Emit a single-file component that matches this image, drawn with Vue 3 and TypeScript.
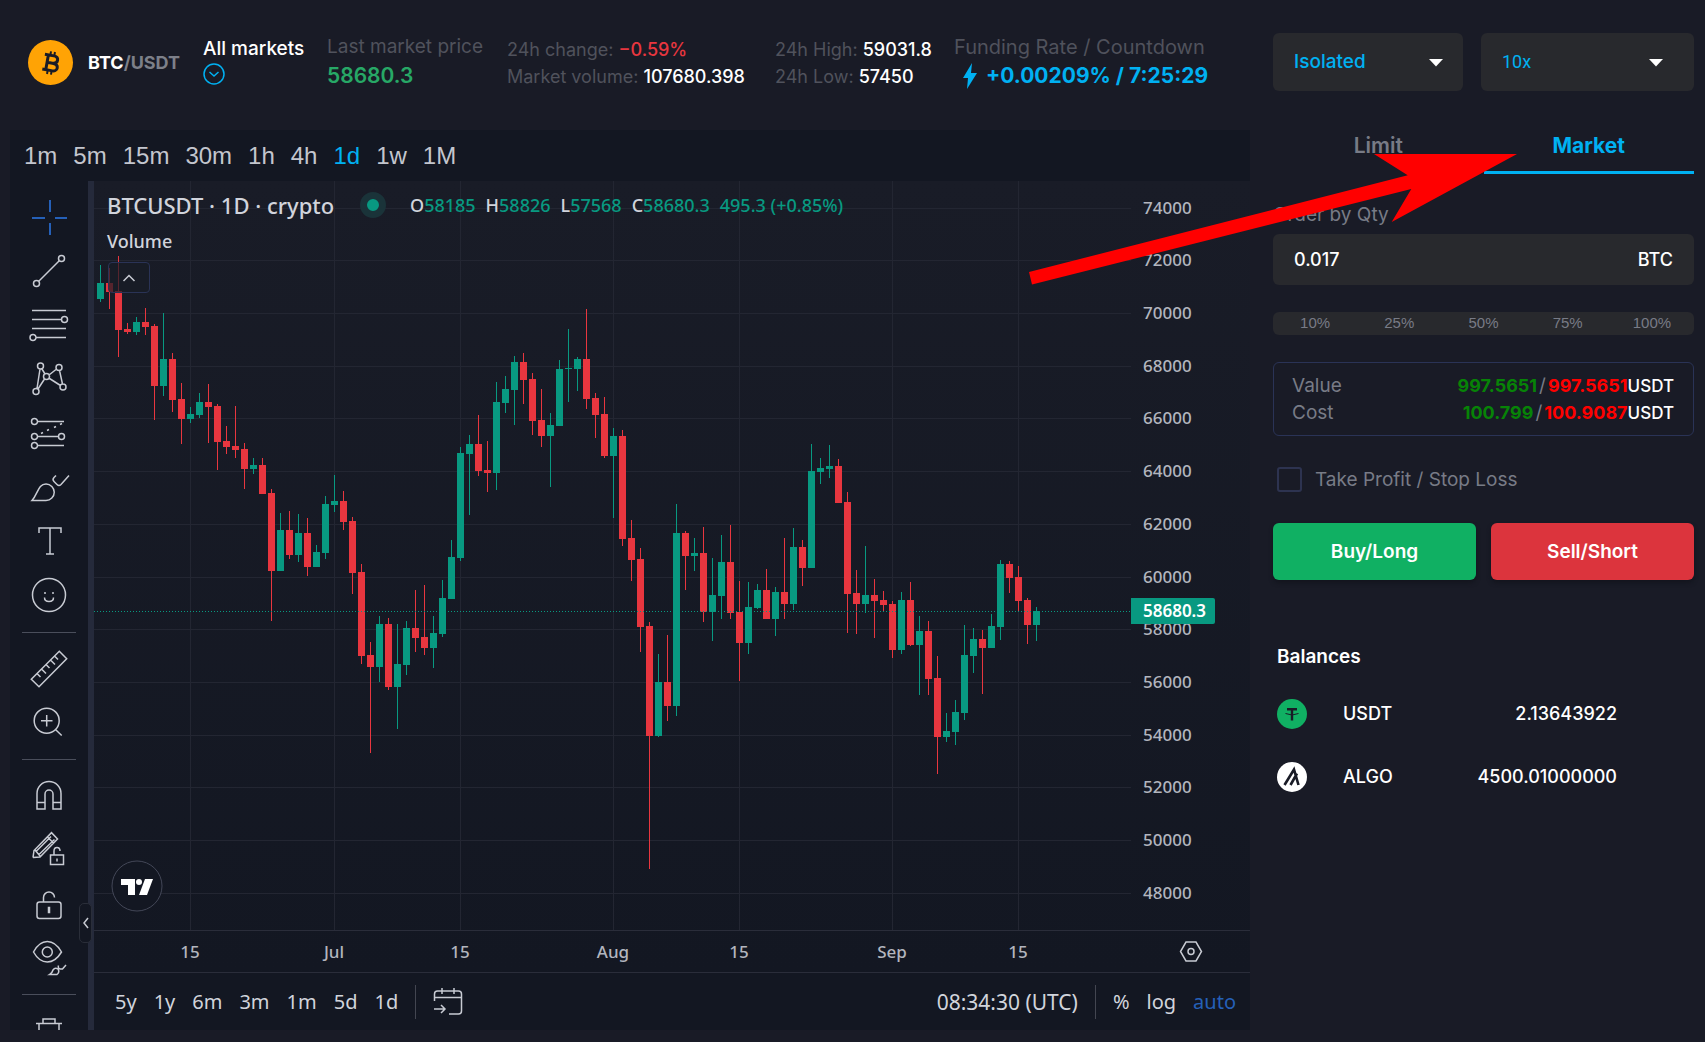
<script setup lang="ts">
import { ref } from 'vue'

type Candle = [up: 0 | 1, high: number, top: number, bottom: number, low: number]

const intervals = ['1m', '5m', '15m', '30m', '1h', '4h', '1d', '1w', '1M']
const activeInterval = ref('1d')
const ranges = ['5y', '1y', '6m', '3m', '1m', '5d', '1d']
const percents = ['10%', '25%', '50%', '75%', '100%']
const marginMode = ref('Isolated')
const leverage = ref('10x')
const qty = ref('0.017')
const takeProfit = ref(false)

const priceTicks = [
  { y: 208, label: '74000' }, { y: 260, label: '72000' }, { y: 313, label: '70000' },
  { y: 366, label: '68000' }, { y: 418, label: '66000' }, { y: 471, label: '64000' },
  { y: 524, label: '62000' }, { y: 577, label: '60000' }, { y: 629, label: '58000' },
  { y: 682, label: '56000' }, { y: 735, label: '54000' }, { y: 787, label: '52000' },
  { y: 840, label: '50000' }, { y: 893, label: '48000' },
]
const timeTicks = [
  { x: 190, label: '15' }, { x: 334, label: 'Jul' }, { x: 460, label: '15' },
  { x: 613, label: 'Aug' }, { x: 739, label: '15' }, { x: 892, label: 'Sep' },
  { x: 1018, label: '15' },
]

const candles: Candle[] = [
  [1, 265, 283, 299, 302], [0, 268, 283, 292, 309], [0, 256, 291, 330, 357], [0, 323, 329, 332, 334],
  [1, 317, 322, 332, 335], [0, 308, 322, 327, 335], [0, 324, 326, 386, 420], [1, 313, 359, 386, 396],
  [0, 353, 359, 400, 412], [0, 383, 399, 419, 444], [1, 407, 414, 419, 423], [1, 393, 402, 415, 418],
  [0, 384, 402, 407, 443], [0, 404, 406, 442, 470], [0, 426, 441, 447, 454], [0, 406, 446, 450, 458],
  [0, 443, 449, 469, 489], [1, 458, 465, 469, 474], [0, 458, 465, 494, 494], [0, 489, 493, 571, 621],
  [1, 513, 530, 571, 571], [0, 511, 530, 555, 559], [1, 514, 533, 555, 562], [0, 518, 533, 567, 576],
  [1, 545, 552, 567, 567], [1, 496, 504, 553, 559], [1, 475, 501, 505, 512], [0, 491, 501, 522, 530],
  [0, 517, 521, 573, 594], [0, 564, 572, 656, 664], [0, 642, 655, 667, 753], [1, 616, 624, 667, 682],
  [0, 618, 624, 687, 690], [1, 624, 664, 687, 729], [1, 621, 628, 665, 675], [0, 590, 628, 638, 652],
  [0, 585, 637, 648, 655], [1, 616, 633, 648, 668], [1, 580, 598, 634, 637], [1, 540, 557, 599, 599],
  [1, 447, 453, 558, 561], [1, 435, 444, 454, 515], [0, 415, 444, 471, 476], [0, 441, 470, 473, 492],
  [1, 382, 402, 473, 490], [1, 376, 389, 403, 413], [1, 356, 362, 390, 425], [0, 353, 362, 380, 404],
  [0, 373, 379, 421, 435], [0, 389, 420, 436, 447], [1, 413, 425, 436, 487], [1, 360, 369, 426, 426],
  [1, 329, 368, 369, 402], [1, 357, 359, 369, 391], [0, 309, 359, 399, 409], [0, 393, 398, 415, 438],
  [0, 397, 414, 456, 458], [1, 428, 436, 456, 518], [0, 430, 436, 539, 546], [0, 520, 538, 560, 581],
  [0, 548, 559, 627, 652], [0, 622, 626, 736, 869], [1, 654, 682, 736, 737], [0, 635, 682, 706, 721],
  [1, 504, 533, 706, 716], [0, 531, 533, 556, 590], [1, 538, 553, 556, 571], [0, 527, 553, 612, 622],
  [1, 558, 595, 612, 641], [1, 535, 562, 596, 619], [0, 525, 562, 613, 619], [0, 581, 612, 643, 681],
  [1, 582, 607, 643, 654], [1, 584, 590, 608, 609], [0, 569, 590, 619, 619], [1, 587, 592, 619, 636],
  [0, 538, 592, 604, 619], [1, 528, 547, 604, 610], [0, 540, 547, 568, 586], [1, 444, 471, 568, 568],
  [1, 458, 468, 472, 484], [1, 445, 466, 469, 478], [0, 459, 466, 503, 503], [0, 492, 502, 594, 633],
  [0, 570, 593, 604, 634], [1, 546, 595, 604, 613], [0, 579, 595, 601, 638], [0, 591, 600, 605, 611],
  [0, 601, 604, 650, 658], [1, 592, 600, 650, 654], [0, 582, 600, 645, 646], [1, 616, 631, 645, 695],
  [0, 621, 631, 679, 695], [0, 656, 678, 737, 774], [1, 713, 731, 737, 742], [1, 700, 712, 732, 745],
  [1, 625, 655, 713, 720], [1, 628, 639, 656, 673], [0, 630, 639, 648, 694], [1, 614, 626, 648, 648],
  [1, 560, 564, 627, 640], [0, 561, 564, 578, 593], [0, 566, 577, 601, 611], [0, 598, 600, 625, 644],
  [1, 607, 611, 625, 641],
]

interface Tool { name: string; d: string; cls?: string; sep?: boolean }
const dot = (x: number, y: number, r = 3) => `M${x - r} ${y}a${r} ${r} 0 1 0 ${2 * r} 0a${r} ${r} 0 1 0 ${-2 * r} 0z`
const tools: Tool[] = [
  { name: 'Cross', cls: 'blue', d: 'M28 9v12M28 32v12M10 27h13M33 27h12' },
  { name: 'Trend line', d: dot(39.5, 13.5) + dot(14.5, 38.5) + 'M17 36L37 16' },
  { name: 'Fib retracement', d: 'M10 11.5h34M10 20.5h29M10 29.5h34M14 38.5h30' + dot(42.5, 20.5) + dot(11, 38.5) },
  { name: 'Patterns', d: dot(18.5, 13) + dot(37, 14.5) + dot(24.5, 23.5) + dot(14, 38.5) + dot(41, 34) + 'M18 16L15 35.500M20 16l3 5M27 22l7-5.500M37.500 17.500l3 13.500M27.500 25.500l11 7M22.500 26L16 36' },
  { name: 'Forecasting', d: dot(12.5, 14.5) + dot(12.5, 29.5) + dot(39.5, 29.5) + dot(12.5, 38.5) + 'M16 14.500h26M16 29.500h20M16 38.500h26M19 26.500l2-1M25 23.500l2-1M32 20.500l2-1M38 17.500l2-1' },
  { name: 'Brush', d: 'M10 39.500C16 33 16 23 24 23a8.200 8.200 0 0 1 0 16.500zM34 14.500l-2 2q-2 2 0 4l3 3q2 2 4 0l8-9' },
  { name: 'Text', d: 'M17 18v-5h22v5M28 13v26M24 39h8' },
  { name: 'Icons', sep: true, d: dot(27, 26, 16.5) + 'M22.500 28.500q0 4 4.500 4t4.500-4M23 23v2M31 23v2' },
  { name: 'Measure', d: 'M37.300 9.300l7.400 7.400L17 44.700l-7.700-7.400zM15.500 32l3 3M20 27.500l4 4M24.500 23l3 3M29 18.500l4 4M33 14.500l3 3' },
  { name: 'Zoom in', sep: true, d: dot(24.7, 24.7, 12.5) + 'M34 34l5.700 5.500M24.700 19v11.500M19 24.700h11.500' },
  { name: 'Magnet', d: 'M15 40V24.500a12 12 0 0 1 24 0V40h-8V25a4 4 0 0 0-8 0v15zM15 33.500h8M31 33.500h8' },
  { name: 'Stay in drawing mode', d: 'M11 34.500l1-7L29.500 9.700l6 6.300L18 34l-7 .5M25.500 14l6 6M14 28.500l15-15M17 31.500l15.500-15M13 27l5 6M28.500 32h13v9.500h-13zM32 32v-4q0-3.500 3-3.500t3 3.500M35 35.500v3' },
  { name: 'Lock all drawings', d: 'M17.500 25h19q2.500 0 2.500 2.500v11.500q0 2.500-2.500 2.500h-19q-2.500 0-2.500-2.500v-11.500q0-2.500 2.500-2.500zM21.500 25v-4.500a5.500 5.500 0 0 1 11 0M26.500 30.500v5h1v-5z' },
  { name: 'Hide all drawings', sep: true, d: 'M11.500 21Q17 10.500 25.300 10.500T39.500 21Q33.500 31 25.300 31T11.500 21z' + dot(25.3, 21, 5) + 'M27.500 43.500q3-2 3.500-4.500 2-3 5-1 2 3-1 5.500zM36.500 34.500q-1 3 2 3.500h2l3.500-4' },
  { name: 'Remove', d: 'M14 19.500h26M21 19v-4h12v4M17 20v20h20V20M24 26v8M30 26v8' },
]
</script>

<template>
  <div class="page">
    <main class="left">
      <header class="ticker">
        <div class="pair">
          <svg width="46" height="46" viewBox="0 0 46 46" aria-hidden="true">
            <circle cx="22.500" cy="22.500" r="22.500" fill="#ffa305" />
            <g fill="none" stroke="#191b26" transform="rotate(10 23 23)">
              <path stroke-width="3" d="M19 15.500v15M15.500 15.500h9q4.500 0 4.500 3.700t-4.500 3.800H19M24.500 23q5.500 0 5.500 3.800t-5.500 3.700h-9" />
              <path stroke-width="2" d="M21 11.500v4M25 11.500v4M21 30.500v4M25 30.500v4" />
            </g>
          </svg>
          <strong>BTC<span>/USDT</span></strong>
        </div>
        <a class="markets" href="#">All markets
          <svg width="22" height="22" viewBox="0 0 22 22" fill="none" stroke="#00b1f2" stroke-width="1.500"><circle cx="11" cy="11" r="10" /><path d="M6.500 9l4.500 4 4.500-4" /></svg>
        </a>
        <div class="stat"><span class="label">Last market price</span><b class="price">58680.3</b></div>
        <div class="pairlines">
          <span>24h change: <em class="neg">−0.59%</em></span>
          <span>Market volume: <em>107680.398</em></span>
        </div>
        <div class="pairlines">
          <span>24h High: <em>59031.8</em></span>
          <span>24h Low: <em>57450</em></span>
        </div>
        <div class="stat">
          <span class="label wide">Funding Rate / Countdown</span>
          <b class="funding"><svg width="14" height="26" viewBox="0 0 14 26" fill="#00b1f2"><path d="M9 0L0 15h5L4 26l10-16H8z" /></svg>+0.00209% / 7:25:29</b>
        </div>
      </header>

      <section class="terminal">
        <nav class="intervals">
          <button v-for="i in intervals" :key="i" :class="{ on: i === activeInterval }" @click="activeInterval = i">{{ i }}</button>
        </nav>
        <div class="body">
          <aside class="tools">
            <template v-for="t in tools" :key="t.name">
              <button :aria-label="t.name" :class="t.cls"><svg width="54" height="54" viewBox="0 0 54 54"><path :d="t.d" /></svg></button>
              <hr v-if="t.sep">
            </template>
          </aside>
          <div class="gutter"><button class="fold" aria-label="Hide drawings toolbar"><svg width="6" height="12" viewBox="0 0 6 12"><path d="M5 1L1 6l4 5" /></svg></button></div>
          <div class="chartcol">
            <div class="canvas">
              <svg class="chart" viewBox="94 181 1156 791">
                <g class="grid">
                  <rect v-for="p in priceTicks" :key="p.y" x="94" :y="p.y" width="1037" height="1" />
                  <rect v-for="t in timeTicks" :key="t.x" :x="t.x" y="181" width="1" height="749" />
                </g>
                <rect class="axis" x="94" y="930" width="1156" height="1" />
                <g v-for="(c, i) in candles" :key="i" :class="c[0] ? 'up' : 'down'">
                  <rect :x="100 + i * 9" :y="c[1]" width="1" :height="c[4] - c[1]" />
                  <rect :x="97 + i * 9" :y="c[2]" width="7" :height="c[3] - c[2]" />
                </g>
                <line x1="94" x2="1131" y1="611.500" y2="611.500" stroke="#089981" stroke-dasharray="1 2" />
                <g class="ticks">
                  <text v-for="p in priceTicks" :key="p.y" x="1143" :y="p.y + 6">{{ p.label }}</text>
                  <text v-for="t in timeTicks" :key="t.x" :x="t.x" y="958" text-anchor="middle">{{ t.label }}</text>
                </g>
                <path class="up" d="M1131 598h82q2 0 2 2v22q0 2-2 2h-82z" />
                <text class="last" x="1143" y="617">58680.3</text>
                <g fill="none" stroke="#c8cbd3" stroke-width="1.500"><path d="M1186 942h10l5.500 9.500-5.500 9.500h-10l-5.500-9.500z" /><circle cx="1191" cy="951.500" r="3" /></g>
                <circle cx="137" cy="886" r="25" fill="#131722" stroke="#434757" />
                <path fill="#fff" d="M121 879h14v16h-7v-10h-7zM145 879h8l-6 16h-8z" /><circle cx="139" cy="882" r="3" fill="#fff" />
              </svg>
              <div class="legend">
                <div class="row">
                  <span class="symbol">BTCUSDT · 1D · crypto</span>
                  <i class="live"></i>
                  <span class="ohlc"><span>O<em>58185</em></span><span>H<em>58826</em></span><span>L<em>57568</em></span><span>C<em>58680.3</em></span><em>495.3 (+0.85%)</em></span>
                </div>
                <span class="volume">Volume</span>
                <button class="collapse" aria-label="Collapse legend"><svg width="14" height="8" viewBox="0 0 14 8"><path d="M1.500 7L7 1.500 12.500 7" /></svg></button>
              </div>
            </div>
            <footer class="ranges">
              <button v-for="r in ranges" :key="r">{{ r }}</button>
              <i class="bar"></i>
              <button class="goto" aria-label="Go to date"><svg width="30" height="30" viewBox="0 0 30 30"><path d="M1.500 14V7q0-3 3-3h21q3 0 3 3v17q0 3-3 3H16M1.500 10.500h27M9 1v6M21 1v6M1 22h11M8 18l4 4-4 4" /></svg></button>
              <span class="clock">08:34:30 (UTC)</span>
              <i class="bar"></i>
              <button class="pct">%</button><button>log</button><button class="auto">auto</button>
            </footer>
          </div>
        </div>
      </section>
    </main>

    <aside class="order">
      <div class="selects">
        <label class="select"><select v-model="marginMode" aria-label="Margin mode"><option>Isolated</option><option>Cross</option></select><svg width="14" height="8" viewBox="0 0 14 8"><path d="M0 0h14L7 7.500z" /></svg></label>
        <label class="select lev"><select v-model="leverage" aria-label="Leverage"><option>10x</option><option>20x</option></select><svg width="14" height="8" viewBox="0 0 14 8"><path d="M0 0h14L7 7.500z" /></svg></label>
      </div>
      <div class="tabs"><button>Limit</button><button class="on">Market</button></div>
      <label class="qtylabel" for="qty">Order by Qty</label>
      <div class="qty"><input id="qty" v-model="qty"><span>BTC</span></div>
      <div class="percents"><button v-for="p in percents" :key="p">{{ p }}</button></div>
      <div class="summary">
        <div><span>Value</span><span class="amount"><b class="g">997.5651</b>/<b class="r">997.5651</b><em>USDT</em></span></div>
        <div><span>Cost</span><span class="amount"><b class="g">100.799</b>/<b class="r">100.9087</b><em>USDT</em></span></div>
      </div>
      <label class="tpsl"><input v-model="takeProfit" type="checkbox">Take Profit / Stop Loss</label>
      <div class="actions"><button class="buy">Buy/Long</button><button class="sell">Sell/Short</button></div>
      <h2>Balances</h2>
      <table>
        <tbody>
          <tr>
            <td class="coin"><svg width="30" height="30" viewBox="0 0 30 30"><circle cx="15" cy="15" r="15" fill="#10b063" /><path d="M10 10.200h10M15 10.200v11.300" stroke="#191b26" stroke-width="2.400" /><path d="M8.500 14.500q6.500 3 13 0" fill="none" stroke="#191b26" /></svg></td>
            <td>USDT</td><td class="num">2.13643922</td>
          </tr>
          <tr>
            <td class="coin"><svg width="30" height="30" viewBox="0 0 30 30"><circle cx="15" cy="15" r="15" fill="#fff" /><path d="M7.500 23L17 7.500 21.500 23M13.500 23L20 11.500" fill="none" stroke="#191b26" stroke-width="2.600" /></svg></td>
            <td>ALGO</td><td class="num">4500.01000000</td>
          </tr>
        </tbody>
      </table>
    </aside>

    <svg class="arrow" width="490" height="132" viewBox="1028 153 490 132" aria-hidden="true"><path fill="#f00" d="M1517 154L1391.700 222 1411.300 189 1032 284.500 1029 272 1407.700 175.300 1374 154z" /></svg>
  </div>
</template>

<style>
body { margin: 0; background: #191b26; }
</style>

<style scoped>
* { box-sizing: border-box; }
.page { position: relative; display: flex; gap: 23px; padding: 0 11px 12px 10px; background: #191b26; color: #fff; font: 18px/26px Inter, sans-serif; overflow: hidden; }
button { background: none; border: 0; padding: 0; margin: 0; color: inherit; font: inherit; cursor: pointer; }
em { font-style: normal; }
.left { flex: 1; min-width: 0; }
.ticker { display: grid; grid-template-columns: 175px 124px 180px 268px 179px 1fr; height: 130px; padding: 34px 0 0 18px; white-space: nowrap; color: #50525c; }
.pair { display: flex; align-items: center; gap: 14px; height: 57px; }
.pair strong { color: #fff; font-weight: 700; }
.pair span { color: #7d8089; font-weight: 700; }
.markets { display: flex; flex-direction: column; gap: 1px; color: #fff; font-size: 19px; font-weight: 500; text-decoration: none; padding-top: 2px; }
.stat { display: flex; flex-direction: column; gap: 3px; }
.label { font-size: 19px; }
.wide { font-size: 20px; }
.price { font-size: 21px; font-weight: 600; color: #27a866; }
.funding { font-size: 21px; font-weight: 700; color: #00b1f2; display: flex; align-items: center; gap: 9px; padding-left: 9px; }
.pairlines { display: flex; flex-direction: column; gap: 1px; padding-top: 3px; }
.pairlines em { color: #fff; font-weight: 500; }
.pairlines .neg { color: #e8363f; }

.terminal { background: #131722; }
.intervals { display: flex; gap: 16px; height: 51px; padding: 0 0 0 14px; color: #c3c6ce; font: 24px/51px "Liberation Sans", sans-serif; }
.intervals .on { color: #00b1f2; }
.body { display: flex; height: 849px; }
.tools { width: 78px; padding: 10px 12px 0; overflow: hidden; }
.tools button { display: block; width: 54px; height: 54px; }
.tools svg { display: block; fill: none; stroke: #c8cbd3; stroke-width: 1.500; }
.tools .blue svg { stroke: #2560b8; stroke-width: 2; }
.tools hr { height: 1px; margin: 9px 0; border: 0; background: #4a4e5b; }
.gutter { position: relative; width: 6px; background: #252a3b; }
.fold { position: absolute; left: -9px; top: 722px; width: 13px; height: 40px; background: #131722; border: 1px solid #2a2e39; border-radius: 5px; display: flex; align-items: center; justify-content: center; }
.fold svg, .collapse svg, .goto svg { flex: none; fill: none; stroke: #c8cbd3; stroke-width: 1.500; }
.chartcol { flex: 1; min-width: 0; font-family: "Noto Sans", sans-serif; }
.canvas { position: relative; background: linear-gradient(#191c27, #131722); }
.chart { display: block; width: 100%; height: auto; }
.grid { fill: #232632; }
.axis { fill: #2a2d3a; }
.up { fill: #089981; }
.down { fill: #e8363f; }
.ticks { fill: #b2b5be; font-size: 17px; font-weight: 500; }
.last { fill: #fff; font-size: 17px; font-weight: 600; }
.legend { position: absolute; left: 13px; top: 9px; color: #d1d4dc; white-space: nowrap; display: flex; flex-direction: column; align-items: flex-start; font-weight: 500; }
.legend .row { display: flex; align-items: center; height: 30px; }
.symbol { font-size: 22px; width: 253px; }
.live { width: 26px; height: 26px; border-radius: 50%; border: 7px solid #1a3339; background: #089981; }
.ohlc { display: flex; gap: 10px; margin-left: 24px; font-size: 18px; }
.ohlc em { color: #089981; }
.volume { font-size: 18px; line-height: 28px; margin-top: 7px; }
.collapse { width: 42px; height: 31px; margin: 7px 0 0 1px; border: 1px solid #2a3356; border-radius: 4px; display: flex; align-items: center; justify-content: center; background: rgba(24, 28, 39, .7); }
.ranges { display: flex; align-items: center; gap: 17px; height: 58px; padding: 0 14px 0 21px; border-top: 1px solid #2a2d3a; color: #d1d4dc; font-size: 20px; }
.bar { width: 1px; height: 34px; background: #434651; }
.goto { height: 30px; }
.clock { margin-left: auto; font-size: 21px; }
.auto { color: #2560b8; }

.order { width: 421px; flex: none; padding-top: 33px; }
.selects { display: flex; gap: 18px; }
.select { position: relative; width: 190px; height: 58px; }
.lev { flex: 1; }
.select select { appearance: none; width: 100%; height: 100%; padding: 0 21px; border: 0; border-radius: 6px; background: #28292d; color: #00b1f2; font: 500 19px/26px Inter, sans-serif; }
.lev select { font: 18px/26px Roboto, sans-serif; }
.select svg { position: absolute; right: 20px; top: 26px; fill: #fff; pointer-events: none; }
.lev svg { right: 31px; }
.tabs { display: flex; margin-top: 26px; height: 57px; }
.tabs button { flex: 1; padding-top: 3px; font-size: 21px; font-weight: 600; color: #787b86; border-bottom: 3px solid transparent; }
.tabs .on { color: #00b1f2; border-color: #00b1f2; font-weight: 700; }
.qtylabel { display: block; margin: 28px 0 6px; font-size: 19px; color: #787b86; }
.qty { display: flex; align-items: center; height: 51px; padding: 0 21px; border-radius: 6px; background: #28292d; font-weight: 500; }
.qty input { flex: 1; min-width: 0; padding: 0; border: 0; outline: 0; background: none; color: #fff; font: inherit; }
.percents { display: flex; height: 23px; margin-top: 27px; border-radius: 6px; background: #28292d; color: #787b86; font: 15px/21px "Liberation Sans", sans-serif; }
.percents button { flex: 1; padding-bottom: 2px; }
.summary { margin-top: 27px; height: 74px; padding: 10px 19px 0 18px; border: 1px solid #2a3356; border-radius: 6px; color: #787b86; font-size: 19px; }
.summary div { display: flex; justify-content: space-between; height: 27px; }
.summary em { color: #fff; font-weight: 500; font-size: 17px; }
.summary b { font-weight: 700; font-size: 18px; }
.summary .g { color: #078307; margin-right: 2px; }
.summary .r { color: #f00; margin-left: 2px; }
.tpsl { display: flex; align-items: center; gap: 13px; margin: 31px 0 0 4px; height: 25px; color: #787b86; font-size: 19px; }
.tpsl input { appearance: none; width: 25px; height: 25px; margin: 0; border: 2px solid #2d3350; border-radius: 3px; }
.tpsl input:checked { background: #00b1f2; }
.actions { display: flex; gap: 15px; margin-top: 31px; height: 57px; font-size: 19px; font-weight: 600; }
.actions button { flex: 1; border-radius: 6px; box-shadow: 0 3px 4px #13151e; }
.buy { background: #10b063; }
.sell { background: #dc343d; }
h2 { margin: 64px 0 0 4px; font-size: 19px; line-height: 26px; font-weight: 600; }
table { width: 340px; margin: 12px 0 0 4px; border-collapse: collapse; font-weight: 500; }
td { height: 63px; padding: 0; }
.coin { width: 66px; }
.coin svg { display: block; }
.num { text-align: right; }
.arrow { position: absolute; left: 1028px; top: 153px; pointer-events: none; }
</style>
